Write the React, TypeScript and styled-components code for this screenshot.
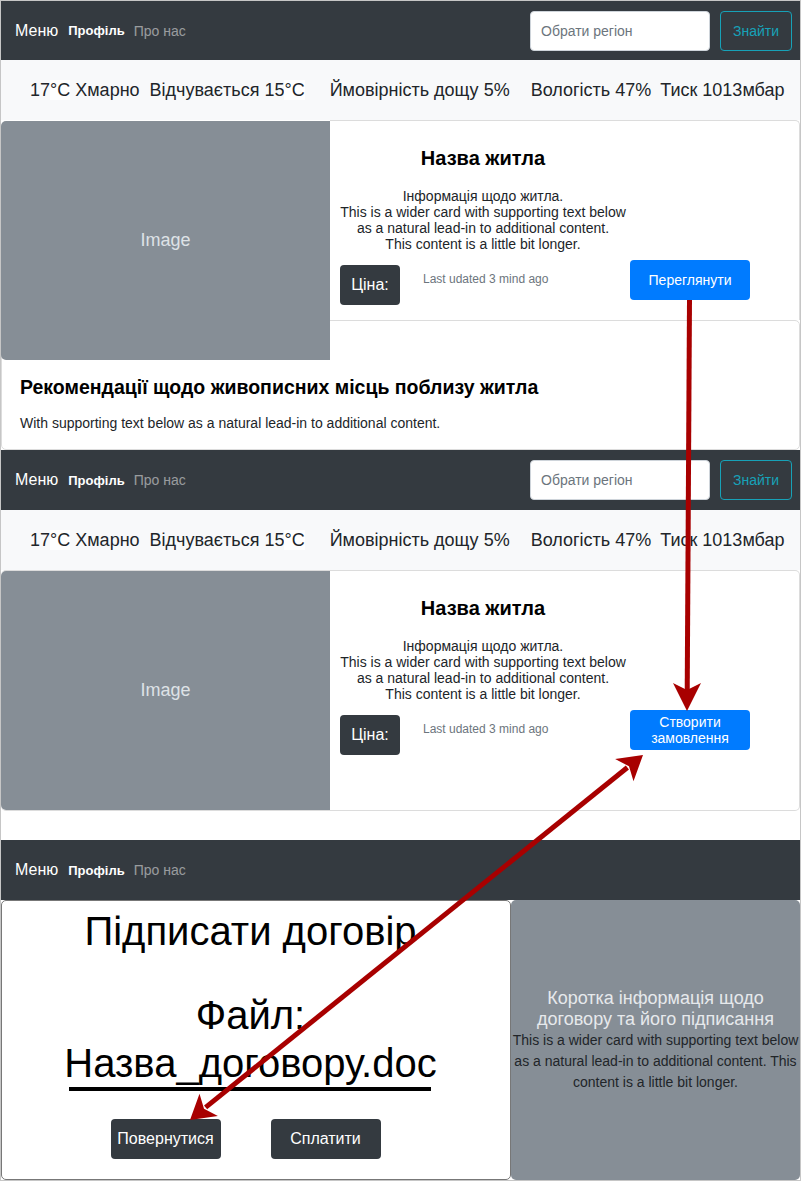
import React from "react";
import styled, { createGlobalStyle } from "styled-components";

const GlobalStyle = createGlobalStyle`
  html, body { margin: 0; padding: 0; background: #fff; }
  body { font-family: "Liberation Sans", Arial, sans-serif; color: #212529; }
  * { box-sizing: border-box; }
`;

const Page = styled.div`
  position: relative;
  width: 801px;
  height: 1181px;
  border: 1px solid #c6c6c6;
  overflow: hidden;
  background: #fff;
  display: flex;
  flex-direction: column;
`;

const Navbar = styled.nav<{ $h?: number }>`
  display: flex;
  align-items: center;
  flex: none;
  height: ${(p) => p.$h ?? 60}px;
  background: #343a40;
  padding: 0 8px 0 14px;
`;

const Brand = styled.span`
  font-size: 16px;
  color: #fff;
  margin-right: 10px;
`;

const NavLink = styled.span<{ $active?: boolean }>`
  font-size: ${(p) => (p.$active ? 13 : 14)}px;
  font-weight: ${(p) => (p.$active ? 700 : 400)};
  color: ${(p) => (p.$active ? "#fff" : "rgba(255,255,255,0.5)")};
  margin-right: ${(p) => (p.$active ? 9 : 11)}px;
`;

const SearchForm = styled.form`
  display: flex;
  margin-left: auto;
  gap: 10px;
`;

const SearchInput = styled.input`
  width: 180px;
  height: 40px;
  border: 1px solid #ced4da;
  border-radius: 4px;
  padding: 0 10px;
  font-family: inherit;
  font-size: 14px;
  color: #495057;
  background: #fff;
  &::placeholder { color: #6c757d; }
`;

const OutlineButton = styled.button`
  width: 72px;
  height: 40px;
  border: 1px solid #17a2b8;
  border-radius: 4px;
  background: transparent;
  color: #17a2b8;
  font-family: inherit;
  font-size: 14px;
  padding: 0;
`;

const WeatherBar = styled.div`
  display: flex;
  align-items: center;
  flex: none;
  height: 60px;
  background: #f8f9fa;
  padding-left: 29px;
  font-size: 18px;
  color: #212529;
  white-space: nowrap;
`;

const WeatherItem = styled.span<{ $gap: number }>`
  margin-right: ${(p) => p.$gap}px;
`;

const Unit = styled.span`
  background: #fff;
`;

/* Frame 1 composite: card + recommendation */
const FeatureGrid = styled.section`
  flex: none;
  display: grid;
  grid-template-columns: 329px 1fr;
  grid-template-rows: 200px 40px 90px;
`;

const ImageBox = styled.div<{ $area: string; $offset?: boolean }>`
  grid-area: ${(p) => p.$area};
  position: relative;
  z-index: 1;
  margin-top: ${(p) => (p.$offset ? 1 : 0)}px;
  background: #868e96;
  color: #dee2e6;
  font-size: 18px;
  display: flex;
  align-items: center;
  justify-content: center;
  border-radius: 5px 0 0 5px;
`;

const CardBody = styled.div<{ $area: string; $bordered?: boolean }>`
  grid-area: ${(p) => p.$area};
  ${(p) =>
    p.$bordered
      ? "border-top: 1px solid #dcdcdc; border-right: 1px solid #dcdcdc; border-radius: 0 5px 0 0;"
      : ""}
  padding-top: 25px;
  display: flex;
  flex-direction: column;
`;

const TextCol = styled.div`
  width: 306px;
  text-align: center;
`;

const CardTitle = styled.h5`
  margin: 0 0 18px;
  font-size: 20px;
  line-height: 24px;
  font-weight: 700;
  color: #000;
`;

const CardText = styled.p`
  margin: 0;
  font-size: 14px;
  line-height: 16px;
  color: #212529;
`;

const CardFooter = styled.div`
  display: flex;
  align-items: flex-start;
  margin-top: 8px;
`;

const PriceTag = styled.button`
  margin: 5px 0 0 10px;
  width: 60px;
  height: 40px;
  border: none;
  border-radius: 4px;
  background: #343a40;
  color: #fff;
  font-family: inherit;
  font-size: 16px;
  padding: 0;
`;

const Meta = styled.small`
  margin: 11px 0 0 23px;
  font-size: 12px;
  line-height: 16px;
  color: #6c757d;
`;

const PrimaryButton = styled.button`
  margin: 0 49px 0 auto;
  width: 120px;
  height: 40px;
  border: none;
  border-radius: 4px;
  background: #007bff;
  color: #fff;
  font-family: inherit;
  font-size: 14px;
  line-height: 16.5px;
  padding: 0 6px;
`;

const RecCard = styled.div`
  grid-area: 2 / 1 / 4 / 3;
  border: 1px solid #dcdcdc;
  border-radius: 5px;
  padding: 54px 0 0 18px;
`;

const RecTitle = styled.h5`
  margin: 0 0 14px;
  font-size: 19.5px;
  line-height: 24px;
  font-weight: 700;
  color: #000;
`;

const RecText = styled.p`
  margin: 0;
  font-size: 14px;
  line-height: 21px;
  color: #212529;
`;

/* Frame 2 card */
const Card = styled.section`
  flex: none;
  height: 241px;
  display: grid;
  grid-template-columns: 329px 1fr;
  border: 1px solid #dcdcdc;
  border-left: none;
  border-radius: 5px;
`;

const Spacer = styled.div`
  flex: none;
  height: 29px;
`;

/* Frame 3 */
const ContractRow = styled.section`
  flex: 1;
  display: grid;
  grid-template-columns: 510px 1fr;
`;

const ContractPanel = styled.div`
  border: 1px solid #777;
  border-radius: 5px;
  padding: 6px 11px 0 0;
  text-align: center;
  color: #000;
`;

const ContractTitle = styled.h1`
  margin: 0 0 36px;
  font-size: 40px;
  line-height: 48px;
  font-weight: 400;
`;

const FileLine = styled.div`
  font-size: 40px;
  line-height: 48px;
`;

const FileName = styled.span`
  position: relative;
  display: inline-block;
  &::after {
    content: "";
    position: absolute;
    left: 5px;
    right: 6px;
    top: 48px;
    height: 4px;
    background: #000;
  }
`;

const ButtonRow = styled.div`
  display: flex;
  justify-content: center;
  gap: 50px;
  margin-top: 32px;
  padding-right: 10px;
`;

const DarkButton = styled.button`
  width: 110px;
  height: 40px;
  border: none;
  border-radius: 4px;
  background: #343a40;
  color: #fff;
  font-family: inherit;
  font-size: 16px;
  padding: 0;
`;

const InfoPanel = styled.div`
  background: #868e96;
  border-radius: 5px;
  display: flex;
  flex-direction: column;
  justify-content: center;
  text-align: center;
`;

const InfoTitle = styled.h5`
  margin: 0;
  font-size: 18px;
  line-height: 21px;
  font-weight: 400;
  color: #e6e9ec;
`;

const InfoText = styled.p`
  margin: 0;
  font-size: 14px;
  line-height: 21px;
  color: #212529;
`;

const Overlay = styled.svg`
  position: absolute;
  left: -1px;
  top: -1px;
  width: 801px;
  height: 1181px;
  pointer-events: none;
  z-index: 10;
`;

const TopNav: React.FC<{ h?: number; search?: boolean }> = ({ h, search = true }) => (
  <Navbar $h={h}>
    <Brand>Меню</Brand>
    <NavLink $active>Профіль</NavLink>
    <NavLink>Про нас</NavLink>
    {search && (
      <SearchForm onSubmit={(e) => e.preventDefault()}>
        <SearchInput placeholder="Обрати регіон" />
        <OutlineButton type="submit">Знайти</OutlineButton>
      </SearchForm>
    )}
  </Navbar>
);

const Weather: React.FC = () => (
  <WeatherBar>
    <WeatherItem $gap={10}>
      17<Unit>°C</Unit> Хмарно
    </WeatherItem>
    <WeatherItem $gap={25}>
      Відчувається 15<Unit>°C</Unit>
    </WeatherItem>
    <WeatherItem $gap={21}>Ймовірність дощу 5%</WeatherItem>
    <WeatherItem $gap={9}>Вологість 47%</WeatherItem>
    <WeatherItem $gap={0}>Тиск 1013мбар</WeatherItem>
  </WeatherBar>
);

const BodyContent: React.FC<{ action: React.ReactNode }> = ({ action }) => (
  <>
    <TextCol>
      <CardTitle>Назва житла</CardTitle>
      <CardText>
        Інформація щодо житла.
        <br />
        This is a wider card with supporting text below
        <br />
        as a natural lead-in to additional content.
        <br />
        This content is a little bit longer.
      </CardText>
    </TextCol>
    <CardFooter>
      <PriceTag>Ціна:</PriceTag>
      <Meta>Last udated 3 mind ago</Meta>
      <PrimaryButton>{action}</PrimaryButton>
    </CardFooter>
  </>
);

const Arrows: React.FC = () => {
  const red = "#a80000";
  return (
    <Overlay viewBox="0 0 801 1181">
      <line x1={689.5} y1={300} x2={687.2} y2={694} stroke={red} strokeWidth={5} />
      <polygon points="687,711 701,683 687,690 673,683" fill={red} />
      <line x1={205.6} y1={1107.4} x2={627.4} y2={767.5} stroke={red} strokeWidth={5} />
      <polygon points="643,755 633.5,781.2 629,766.3 615.1,759" fill={red} />
      <polygon points="190,1120 199.5,1093.8 204,1108.7 217.9,1116" fill={red} />
    </Overlay>
  );
};

export default function App() {
  return (
    <>
      <GlobalStyle />
      <Page>
        <TopNav h={59} />
        <Weather />
        <FeatureGrid>
          <ImageBox $area="1 / 1 / 3 / 2" $offset>
            Image
          </ImageBox>
          <CardBody $area="1 / 2 / 2 / 3" $bordered>
            <BodyContent action="Переглянути" />
          </CardBody>
          <RecCard>
            <RecTitle>Рекомендації щодо живописних місць поблизу житла</RecTitle>
            <RecText>With supporting text below as a natural lead-in to additional content.</RecText>
          </RecCard>
        </FeatureGrid>

        <TopNav />
        <Weather />
        <Card>
          <ImageBox $area="1 / 1 / 2 / 2">Image</ImageBox>
          <CardBody $area="1 / 2 / 2 / 3">
            <BodyContent
              action={
                <>
                  Створити
                  <br />
                  замовлення
                </>
              }
            />
          </CardBody>
        </Card>
        <Spacer />

        <TopNav search={false} />
        <ContractRow>
          <ContractPanel>
            <ContractTitle>Підписати договір</ContractTitle>
            <FileLine>Файл:</FileLine>
            <FileLine>
              <FileName>Назва_договору.doc</FileName>
            </FileLine>
            <ButtonRow>
              <DarkButton>Повернутися</DarkButton>
              <DarkButton>Сплатити</DarkButton>
            </ButtonRow>
          </ContractPanel>
          <InfoPanel>
            <InfoTitle>
              Коротка інформація щодо
              <br />
              договору та його підписання
            </InfoTitle>
            <InfoText>
              This is a wider card with supporting text below
              <br />
              as a natural lead-in to additional content. This
              <br />
              content is a little bit longer.
            </InfoText>
          </InfoPanel>
        </ContractRow>
        <Arrows />
      </Page>
    </>
  );
}
